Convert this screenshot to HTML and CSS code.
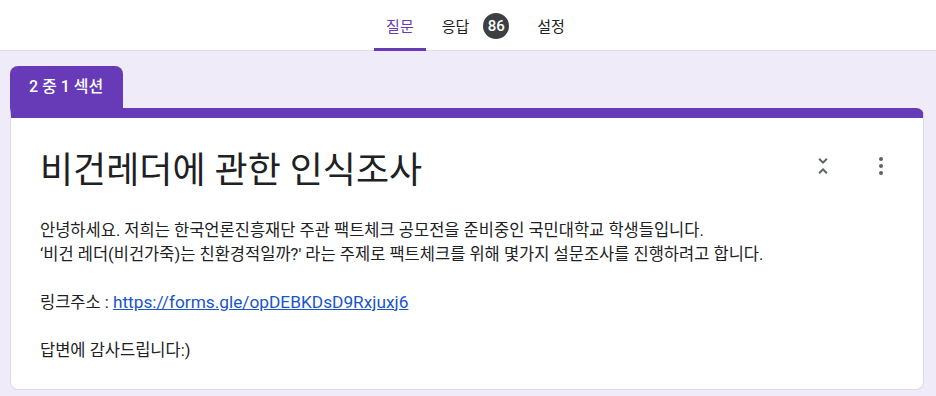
FILE: index.html
```html
<!DOCTYPE html>
<html lang="ko">
<head>
    <meta charset="UTF-8">
    <meta name="viewport" content="width=device-width, initial-scale=1.0">
    <title>비건레더에 관한 인식조사</title>
    <link rel="stylesheet" href="styles.css">
</head>
<body>
    <header class="topbar">
        <nav class="tabs">
            <a class="tab active" href="#">질문</a>
            <a class="tab" href="#">응답 <span class="badge">86</span></a>
            <a class="tab" href="#">설정</a>
        </nav>
    </header>
    <main class="page">
        <div class="section-label">2 중 1 섹션</div>
        <section class="card">
            <div class="card-head">
                <h1>비건레더에 관한 인식조사</h1>
                <div class="actions">
                    <button class="icon-btn" type="button" title="접기">
                        <svg width="24" height="24" viewBox="0 0 24 24"><path d="M7.41 18.59L8.83 20 12 16.83 15.17 20l1.41-1.41L12 14l-4.59 4.59zm9.18-13.18L15.17 4 12 7.17 8.83 4 7.41 5.41 12 10l4.59-4.59z" fill="#5f6368"/></svg>
                    </button>
                    <button class="icon-btn" type="button" title="더보기">
                        <svg width="24" height="24" viewBox="0 0 24 24"><circle cx="12" cy="5" r="2" fill="#5f6368"/><circle cx="12" cy="12" r="2" fill="#5f6368"/><circle cx="12" cy="19" r="2" fill="#5f6368"/></svg>
                    </button>
                </div>
            </div>
            <div class="desc">
                <p>안녕하세요. 저희는 한국언론진흥재단 주관 팩트체크 공모전을 준비중인 국민대학교 학생들입니다.<br>‘비건 레더(비건가죽)는 친환경적일까?' 라는 주제로 팩트체크를 위해 몇가지 설문조사를 진행하려고 합니다.</p>
                <p>링크주소 : <a href="#">https://forms.gle/opDEBKDsD9Rxjuxj6</a></p>
                <p>답변에 감사드립니다:)</p>
            </div>
        </section>
    </main>
</body>
</html>
```

FILE: styles.css
```css
body {
    margin: 0;
    background-color: #f0ebf8;
    font-family: 'Roboto', 'Noto Sans CJK KR', sans-serif;
    color: #202124;
}

.topbar {
    height: 50px;
    background-color: #fff;
    border-bottom: 1px solid #e0dce8;
    display: flex;
    justify-content: center;
    padding-left: 15px;
}

.tabs {
    display: flex;
    gap: 4px;
}

.tab {
    display: flex;
    align-items: center;
    padding: 3px 12px 0;
    font-size: 15px;
    font-weight: 400;
    color: #202124;
    text-decoration: none;
    border-bottom: 3px solid transparent;
    margin-bottom: -1px;
}

.tab.active {
    color: #673ab7;
    border-bottom-color: #673ab7;
}

.badge {
    display: inline-flex;
    align-items: center;
    justify-content: center;
    width: 26px;
    height: 26px;
    margin-left: 14px;
    border-radius: 50%;
    background-color: #3c4043;
    color: #fff;
    font-size: 15px;
    font-weight: 500;
}

.page {
    margin: 15px 12px 0 10px;
}

.section-label {
    display: inline-block;
    height: 42px;
    line-height: 42px;
    padding: 0 20px 0 19px;
    background-color: #673ab7;
    color: #fff;
    font-size: 16px;
    font-weight: 500;
    border-radius: 8px 8px 0 0;
    vertical-align: top;
}

.card {
    background-color: #fff;
    border: 1px solid #dadce0;
    border-top: 10px solid #673ab7;
    border-radius: 0 8px 8px 8px;
    padding: 27px 18px 26px 29px;
}

.card-head {
    display: flex;
    justify-content: space-between;
    align-items: flex-start;
}

h1 {
    margin: 0;
    font-size: 36px;
    font-weight: 400;
    line-height: 52px;
}

.actions {
    display: flex;
    gap: 10px;
    margin-top: 9px;
}

.icon-btn {
    width: 48px;
    height: 24px;
    padding: 0;
    border: none;
    background: none;
    display: flex;
    justify-content: center;
    cursor: pointer;
}

.desc {
    margin-top: 22px;
    font-size: 16.5px;
    line-height: 24px;
}

.desc p {
    margin: 0 0 24px;
    height: 24px;
}

.desc p:first-child {
    height: 48px;
}

.desc p:last-child {
    margin-bottom: 0;
}

.desc a {
    color: #1a55c8;
    font-size: 17.3px;
    line-height: 16px;
}
```
